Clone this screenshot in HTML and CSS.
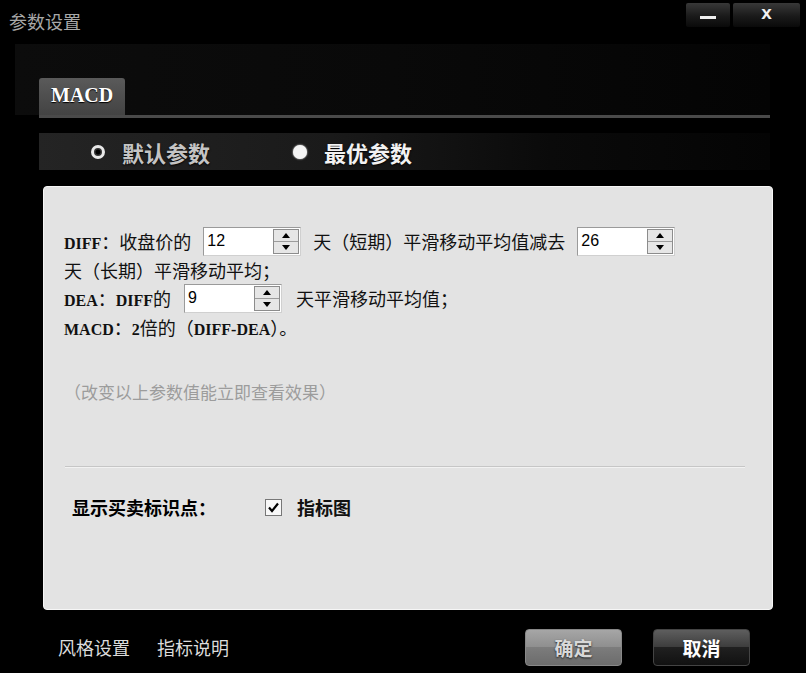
FILE: index.html
```html
<!DOCTYPE html>
<html lang="zh-CN">
  <head>
    <meta charset="UTF-8" />
    <title>参数设置</title>
    <link rel="stylesheet" href="styles.css">
  </head>
  <body>
    <div class="window">
      <!-- 标题栏 -->
      <div class="titlebar">
        <div class="title">参数设置</div>
        <div class="win-btns">
          <div class="win-btn min"><span class="min-bar"></span></div>
          <div class="win-btn close">x</div>
        </div>
      </div>

      <!-- 指标标签 -->
      <div class="tab-strip">
        <div class="tab">MACD</div>
      </div>
      <div class="tab-line"></div>

      <!-- 参数选择 -->
      <div class="radio-row">
        <label class="radio-item">
          <span class="radio ring"></span>
          <span class="radio-text dim">默认参数</span>
        </label>
        <label class="radio-item second">
          <span class="radio filled"></span>
          <span class="radio-text">最优参数</span>
        </label>
      </div>

      <!-- 参数面板 -->
      <section class="panel">
        <div class="line tall"><span class="en">DIFF</span>：收盘价的<span class="spin"><span class="spin-val">12</span><span class="spin-btn"><i class="up"></i><i class="down"></i></span></span>天（短期）平滑移动平均值减去<span class="spin"><span class="spin-val">26</span><span class="spin-btn"><i class="up"></i><i class="down"></i></span></span></div>
        <div class="line">天（长期）平滑移动平均；</div>
        <div class="line tall"><span class="en">DEA</span>：<span class="en">DIFF</span>的<span class="spin wide"><span class="spin-val">9</span><span class="spin-btn"><i class="up"></i><i class="down"></i></span></span>天平滑移动平均值；</div>
        <div class="line"><span class="en">MACD</span>：<span class="en">2</span>倍的（<span class="en">DIFF-DEA</span>）。</div>

        <div class="hint">（改变以上参数值能立即查看效果）</div>

        <div class="divider"></div>

        <div class="mark-row">
          <span class="mark-label">显示买卖标识点：</span>
          <span class="checkbox"><svg width="13" height="13" viewBox="0 0 13 13"><path d="M2 6.5 L5 10 L11 2.5" fill="none" stroke="#000" stroke-width="2.2"/></svg></span>
          <span class="mark-text">指标图</span>
        </div>
      </section>

      <!-- 底部 -->
      <div class="footer">
        <span class="link">风格设置</span>
        <span class="link">指标说明</span>
        <div class="btns">
          <button class="btn ok">确定</button>
          <button class="btn cancel">取消</button>
        </div>
      </div>
    </div>
  </body>
</html>
```

FILE: styles.css
```css
body {
  margin: 0;
  padding: 0;
  background: #000;
  font-family: "Noto Sans CJK SC", sans-serif;
  overflow: hidden;
}

.window {
  width: 806px;
  height: 673px;
}

/* 标题栏 */
.titlebar {
  height: 44px;
  display: flex;
  justify-content: space-between;
  align-items: flex-start;
}

.title {
  margin: 9px 0 0 9px;
  font-size: 18px;
  line-height: 24px;
  color: #a8a8a8;
}

.win-btns {
  display: flex;
  gap: 3px;
  margin: 3px 6px 0 0;
}

.win-btn {
  height: 24px;
  border-radius: 2px;
  background: linear-gradient(#383838, #1a1a1a 55%, #0a0a0a);
  display: flex;
  align-items: center;
  justify-content: center;
}

.min {
  width: 44px;
}

.min-bar {
  width: 16px;
  height: 3px;
  margin-top: 5px;
  background: #eee;
}

.close {
  width: 67px;
  color: #f2f2f2;
  font: bold 19px "Liberation Sans", sans-serif;
  line-height: 16px;
  padding-bottom: 5px;
  box-sizing: border-box;
}

/* 标签 */
.tab-strip {
  margin: 0 36px 0 15px;
  padding: 34px 0 0 24px;
  background: linear-gradient(90deg, #0c0c0c, #090909 50%, #040404);
}

.tab {
  width: 86px;
  height: 37px;
  box-sizing: border-box;
  padding: 6px 0 0 12px;
  border-radius: 3px 3px 0 0;
  background: linear-gradient(#5a5a5a, #434343);
  color: #fff;
  font: bold 20px "Liberation Serif", serif;
  text-shadow: 0 1px 1px #000;
}

.tab-line {
  height: 3px;
  margin: 0 36px 0 39px;
  background: #4a4a4a;
}

/* 单选 */
.radio-row {
  height: 37px;
  margin: 15px 36px 0 39px;
  padding-left: 52px;
  display: flex;
  align-items: center;
  background: linear-gradient(90deg, #242424, #1a1a1a 40%, #0a0a0a 70%, #040404);
}

.radio-item {
  display: flex;
  align-items: center;
}

.radio-item.second {
  margin-left: 83px;
}

.radio {
  width: 14px;
  height: 14px;
  border-radius: 50%;
  box-sizing: border-box;
}

.radio.ring {
  border: 3px solid #e8e8e8;
  background: radial-gradient(circle, #000 2px, #333 3px);
}

.radio.filled {
  background: #f4f4f4;
  box-shadow: 0 0 2px #fff;
}

.radio-text {
  margin-left: 17px;
  font-size: 22px;
  font-weight: bold;
  color: #f2f2f2;
  text-shadow: 0 1px 2px #000;
}

.radio-text.dim {
  color: #c4c4c4;
}

/* 面板 */
.panel {
  height: 424px;
  margin: 16px 33px 0 43px;
  padding: 40px 27px 0 20px;
  box-sizing: border-box;
  border: 1px solid #f6f6f6;
  border-radius: 4px;
  background: #e3e3e3;
  color: #111;
  font-size: 18px;
}

.line {
  height: 28px;
  line-height: 28px;
  white-space: nowrap;
}

.line.tall {
  height: 29px;
  line-height: 29px;
}

.en {
  font: bold 16px "Liberation Serif", serif;
}

.spin {
  width: 98px;
  height: 29px;
  margin: 0 12px;
  box-sizing: border-box;
  display: inline-flex;
  vertical-align: top;
  border: 1px solid #9a9a9a;
  border-right-color: #d0d0d0;
  border-bottom-color: #d0d0d0;
  background: #fff;
}

.spin.wide {
  margin: 0 14px 0 13px;
}

.spin-val {
  flex: 1;
  padding-left: 3px;
  font: 16px "Liberation Sans", sans-serif;
  line-height: 26px;
  color: #000;
}

.spin-btn {
  width: 24px;
  margin: 1px;
  display: flex;
  flex-direction: column;
  border: 1px solid #8c8c8c;
  background: #e6e6e6;
}

.spin-btn i {
  flex: 1;
  display: flex;
  align-items: center;
  justify-content: center;
}

.spin-btn .up {
  border-bottom: 1px solid #9c9c9c;
}

.spin-btn .up::after,
.spin-btn .down::after {
  content: "";
  border-left: 4px solid transparent;
  border-right: 4px solid transparent;
}

.spin-btn .up::after {
  border-bottom: 5px solid #000;
}

.spin-btn .down::after {
  border-top: 5px solid #000;
}

.hint {
  margin-top: 37px;
  height: 28px;
  line-height: 28px;
  font-size: 17px;
  color: #9c9c9c;
}

.divider {
  height: 1px;
  margin: 60px 0 0 1px;
  background: #c6c6c6;
  border-bottom: 1px solid #f2f2f2;
}

.mark-row {
  height: 28px;
  margin: 25px 0 0 8px;
  display: flex;
  align-items: center;
}

.mark-label {
  width: 193px;
  font-weight: bold;
  color: #000;
}

.checkbox {
  width: 17px;
  height: 17px;
  box-sizing: border-box;
  border: 1px solid #777;
  background: #f8f8f8;
  display: flex;
  align-items: center;
  justify-content: center;
}

.mark-text {
  margin-left: 15px;
  font-weight: bold;
  color: #111;
}

/* 底部 */
.footer {
  height: 38px;
  margin-top: 18px;
  display: flex;
  align-items: center;
}

.link {
  margin-left: 58px;
  font-size: 18px;
  color: #dcdcdc;
}

.link + .link {
  margin-left: 27px;
}

.btns {
  margin-left: auto;
  margin-right: 56px;
  display: flex;
  gap: 31px;
}

.btn {
  width: 97px;
  height: 37px;
  padding: 0;
  border: 1px solid #555;
  border-radius: 4px;
  font-family: "Noto Sans CJK SC", sans-serif;
  font-size: 19px;
  font-weight: bold;
  text-shadow: 0 1px 2px #222;
}

.btn.ok {
  color: #d8d8d8;
  background: linear-gradient(#a6a6a6, #8e8e8e 50%, #7c7c7c 50%, #6c6c6c);
  border-color: #888;
}

.btn.cancel {
  color: #fff;
  background: linear-gradient(#5e5e5e, #3c3c3c 50%, #202020 50%, #111);
  border-color: #444;
}
```
